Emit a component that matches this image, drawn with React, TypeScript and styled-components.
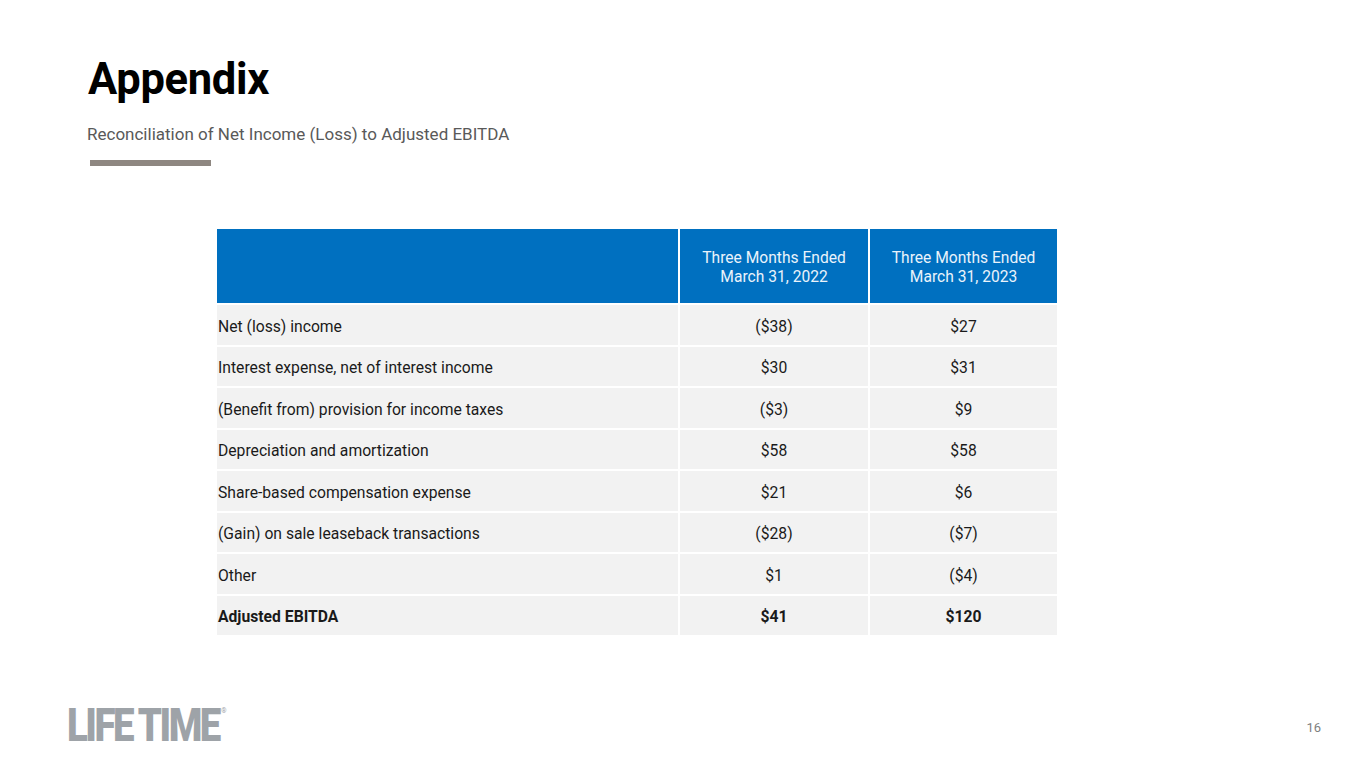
import React from "react";
import styled, {createGlobalStyle} from "styled-components";

const GlobalStyle = createGlobalStyle`
    html, body {
        margin: 0;
        padding: 0;
        background: #ffffff;
        font-family: Roboto, "Liberation Sans", sans-serif;
    }
`

const rows = [
    {label: 'Net (loss) income', a: '($38)', b: '$27'},
    {label: 'Interest expense, net of interest income', a: '$30', b: '$31'},
    {label: '(Benefit from) provision for income taxes', a: '($3)', b: '$9'},
    {label: 'Depreciation and amortization', a: '$58', b: '$58'},
    {label: 'Share-based compensation expense', a: '$21', b: '$6'},
    {label: '(Gain) on sale leaseback transactions', a: '($28)', b: '($7)'},
    {label: 'Other', a: '$1', b: '($4)'},
    {label: 'Adjusted EBITDA', a: '$41', b: '$120', bold: true},
]

const App: React.FC = () => {
    return (
        <Slide>
            <GlobalStyle/>
            <Header>
                <Title>Appendix</Title>
                <Subtitle>Reconciliation of Net Income (Loss) to Adjusted EBITDA</Subtitle>
                <Rule/>
            </Header>
            <TableWrap>
                <Grid>
                    <HeadCell/>
                    <HeadCell>Three Months Ended<br/>March 31, 2022</HeadCell>
                    <HeadCell>Three Months Ended<br/>March 31, 2023</HeadCell>
                    {rows.map((r) => (
                        <React.Fragment key={r.label}>
                            <Cell bold={r.bold}>{r.label}</Cell>
                            <Cell bold={r.bold} center>{r.a}</Cell>
                            <Cell bold={r.bold} center>{r.b}</Cell>
                        </React.Fragment>
                    ))}
                </Grid>
            </TableWrap>
            <Footer>
                <Logo>LIFE TIME<Reg>®</Reg></Logo>
                <PageNo>16</PageNo>
            </Footer>
        </Slide>
    )
}

export default App

const Slide = styled.div`
    width: 1365px;
    height: 768px;
    display: flex;
    flex-direction: column;
    box-sizing: border-box;
    overflow: hidden;
    background: #ffffff;
`

const Header = styled.div`
    display: flex;
    flex-direction: column;
    padding: 52px 0 0 88px;
`

const Title = styled.h1`
    margin: 0;
    font-family: Roboto, "Liberation Sans", sans-serif;
    font-weight: 700;
    font-size: 43.5px;
    line-height: 56px;
    color: #000000;
    letter-spacing: -0.3px;
`

const Subtitle = styled.div`
    margin: 16px 0 0 -1px;
    font-size: 17px;
    line-height: 20px;
    color: #595959;
`

const Rule = styled.div`
    margin: 16px 0 0 2px;
    width: 121px;
    height: 6px;
    background: #8e8781;
`

const TableWrap = styled.div`
    display: flex;
    padding: 63px 0 0 217px;
`

const Grid = styled.div`
    display: grid;
    grid-template-columns: 461px 188px 187px;
    grid-template-rows: 74px repeat(8, 39.5px);
    column-gap: 2px;
    row-gap: 2px;
    width: 840px;
`

const HeadCell = styled.div`
    background: #0070c0;
    color: #eaf3fb;
    font-size: 15.6px;
    line-height: 19px;
    text-align: center;
    display: flex;
    align-items: center;
    justify-content: center;
    padding-top: 4px;
`

const Cell = styled.div<{center?: boolean; bold?: boolean}>`
    background: #f2f2f2;
    color: #1a1a1a;
    font-size: 15.7px;
    font-weight: ${(p) => p.bold ? 700 : 400};
    display: flex;
    align-items: center;
    justify-content: ${(p) => p.center ? 'center' : 'flex-start'};
    padding: 3px 0 0 ${(p) => p.center ? '0' : '1px'};
`

const Footer = styled.div`
    margin-top: auto;
    display: flex;
    align-items: flex-end;
    justify-content: space-between;
    padding: 0 44px 26px 67px;
`

const Logo = styled.div`
    position: relative;
    font-family: Roboto, "Liberation Sans", sans-serif;
    font-weight: 900;
    font-size: 46px;
    line-height: 34px;
    height: 34px;
    color: #9ea3a8;
    letter-spacing: -3px;
    transform: scaleX(0.835);
    transform-origin: left bottom;
    white-space: nowrap;
`

const Reg = styled.span`
    position: absolute;
    top: -1px;
    font-size: 8px;
    line-height: 8px;
    letter-spacing: 0;
    font-weight: 400;
    margin-left: 3px;
`

const PageNo = styled.div`
    font-size: 13px;
    color: #7f7f7f;
    line-height: 14px;
    margin-bottom: 7px;
`
